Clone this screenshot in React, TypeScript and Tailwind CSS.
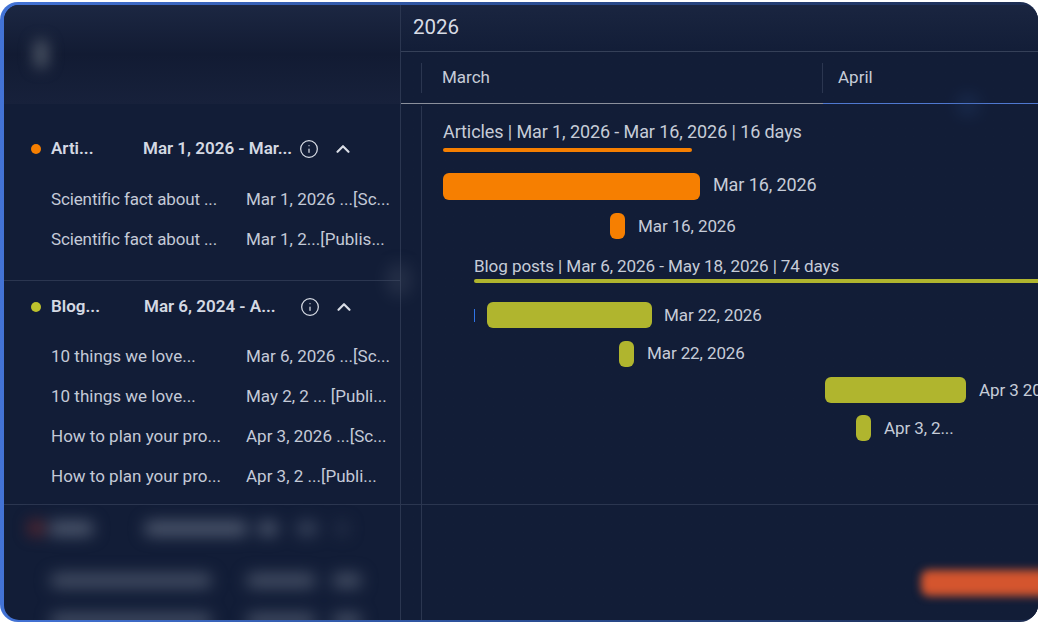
import { ChevronUp, Info } from "lucide-react";

const roboto = "font-['Roboto',sans-serif]";

function GroupHeader({ dot, name, range, nameW, rangeW }: { dot: string; name: string; range: string; nameW: string; rangeW: string }) {
  return (
    <div className="flex h-[40px] items-center pl-[27px]">
      <span className={`h-[10px] w-[10px] shrink-0 rounded-full ${dot}`} />
      <span className={`ml-[10px] whitespace-nowrap text-[17px] font-semibold text-[#d4d9e3] ${nameW}`}>{name}</span>
      <span className={`whitespace-nowrap text-[17px] font-semibold text-[#d4d9e3] ${rangeW}`}>{range}</span>
      <Info size={20} strokeWidth={1.5} className="text-[#d8dce5]" />
      <ChevronUp size={22} strokeWidth={2.4} className="ml-[13px] text-[#d8dce5]" />
    </div>
  );
}

function Item({ a, b, c, tight }: { a: string; b: string; c: string; tight?: boolean }) {
  return (
    <div className="flex h-[40px] items-center pl-[47px] text-[17px] text-[#c4cad7]">
      <span className={tight ? "w-[195px] whitespace-nowrap tracking-[-0.13px]" : "w-[195px] whitespace-nowrap"}>{a}</span>
      <span className="whitespace-nowrap">{b}</span>
      <span className="whitespace-nowrap">{c}</span>
    </div>
  );
}

function BarRow({ left, width, height, color, label, top, text }: { left: string; width: string; height: string; color: string; label: string; top: string; text: string }) {
  return (
    <div className={`flex items-center ${left} ${top}`}>
      <span className={`shrink-0 rounded-[6px] ${width} ${height} ${color}`} />
      <span className={`ml-[13px] whitespace-nowrap leading-[20px] tracking-[-0.1px] text-[#c6ccd8] ${text}`}>{label}</span>
    </div>
  );
}

function BlurRow({ top }: { top: string }) {
  return (
    <div className={`ml-[22px] flex shrink-0 items-center ${top}`}>
      <span className="h-[13px] w-[160px] rounded bg-[#4a5469]" />
      <span className="ml-[36px] h-[13px] w-[68px] rounded bg-[#4a5469]" />
      <span className="ml-[18px] h-[13px] w-[28px] rounded bg-[#4a5469]" />
    </div>
  );
}

export default function App() {
  return (
    <div className={`h-[624px] w-[1038px] overflow-hidden bg-white pt-[2px] ${roboto}`}>
      <div className="h-[620px] w-[1038px] rounded-[18px] bg-gradient-to-r from-[#4373d6] via-[#2b4f96] to-[#1c2c50] pb-[2px] pl-[4px] pt-[3px]">
        <div className="relative flex h-[615px] overflow-hidden rounded-[15px] bg-[#121d37]">
          <div className="flex w-[396px] shrink-0 flex-col">
            <div className="flex h-[99px] shrink-0 items-center bg-gradient-to-b from-[#1c2742] via-[#121b33] to-[#17213b] pl-[27px]">
              <div className="mb-[2px] ml-[2px] h-[30px] w-[16px] rounded-full bg-[#444d5e] blur-[7px]" />
            </div>
            <div className="h-[177px] shrink-0 border-b border-[#2b3650] pt-[25px]">
              <GroupHeader dot="bg-[#f67f01]" name="Arti..." range="Mar 1, 2026 - Mar..." nameW="w-[92px]" rangeW="w-[156px]" />
              <div className="pt-[11px]">
                <Item tight a="Scientific fact about ..." b="Mar 1, 2026 ..." c="[Sc..." />
                <Item tight a="Scientific fact about ..." b="Mar 1, 2..." c="[Publis..." />
              </div>
            </div>
            <div className="h-[224px] shrink-0 border-b border-[#2b3650] pt-[6px]">
              <GroupHeader dot="bg-[#bec22d]" name="Blog..." range="Mar 6, 2024 - A..." nameW="w-[93px]" rangeW="w-[156px]" />
              <div className="pt-[10px]">
                <Item a="10 things we love..." b="Mar 6, 2026 ..." c="[Sc..." />
                <Item a="10 things we love..." b={"May 2, 2 ...\u00a0"} c="[Publi..." />
                <Item a="How to plan your pro..." b="Apr 3, 2026 ..." c="[Sc..." />
                <Item a="How to plan your pro..." b="Apr 3, 2 ..." c="[Publi..." />
              </div>
            </div>
            <div className="flex min-h-0 flex-1 flex-col pl-[25px] pt-[16px] blur-[8px]">
              <div className="flex shrink-0 items-center">
                <span className="h-[14px] w-[14px] rounded-full bg-[#7a2b2a]" />
                <span className="ml-[6px] h-[13px] w-[44px] rounded bg-[#566075]" />
                <span className="ml-[52px] h-[13px] w-[102px] rounded bg-[#566075]" />
                <span className="ml-[12px] h-[13px] w-[18px] rounded bg-[#566075]" />
                <span className="ml-[20px] h-[13px] w-[20px] rounded bg-[#3d4860]" />
                <span className="ml-[20px] h-[13px] w-[10px] rounded bg-[#2d3850]" />
              </div>
              <BlurRow top="mt-[39px]" />
              <BlurRow top="mt-[27px]" />
            </div>
          </div>

          <div className="flex min-w-0 flex-1 flex-col overflow-hidden border-l border-[#2b3650] bg-gradient-to-b from-[#1a2540] to-[#121d37] to-[8%]">
            <div className="flex h-[47px] shrink-0 items-center border-b border-[#354058] pb-[2px] pl-[12px] text-[20.5px] text-[#d8dce5]">2026</div>
            <div className="flex h-[51px] shrink-0 items-center pl-[20px]">
              <div className="flex h-[30px] w-[401px] items-center border-l border-[#2b3650] pl-[20px] text-[17px] text-[#c6ccd8]">March</div>
              <div className="flex h-[30px] items-center border-l border-[#2b3650] pl-[15px] text-[17px] text-[#c6ccd8]">April</div>
            </div>
            <div className="flex h-px shrink-0">
              <div className="w-[422px] bg-[#8b909c]" />
              <div className="flex-1 bg-[#4f78d0]" />
            </div>
            <div className="relative flex min-h-0 flex-1 flex-col">
              <div className="absolute bottom-0 left-[20px] top-[2px] w-px bg-[#2b3650]" />
              <div className="h-[401px] shrink-0 overflow-hidden border-b border-[#2b3650] pl-[42px]">
                <div className="mt-[16px] whitespace-nowrap text-[18px] leading-[24px] tracking-[-0.1px] text-[#c6ccd8]">Articles | Mar 1, 2026 - Mar 16, 2026 | 16 days</div>
                <div className="mt-[4px] h-[4px] w-[249px] rounded-full bg-[#f67f01]" />
                <BarRow top="mt-[21px]" left="" width="w-[257px]" height="h-[27px]" color="bg-[#f67f01]" label="Mar 16, 2026" text="pb-[3px] text-[18px]" />
                <BarRow top="mt-[13px]" left="ml-[167px]" width="w-[15px]" height="h-[26px]" color="bg-[#f67f01]" label="Mar 16, 2026" text="text-[17px]" />
                <div className="ml-[31px] mt-[15px] whitespace-nowrap text-[17.1px] leading-[24px] tracking-[-0.1px] text-[#c6ccd8]">Blog posts | Mar 6, 2026 - May 18, 2026 | 74 days</div>
                <div className="ml-[31px] mt-[1px] h-[4px] rounded-l-full bg-[#b0b52e]" />
                <div className="ml-[31px] mt-[19px] flex items-center">
                  <span className="h-[13px] w-px shrink-0 bg-[#2f74e8]" />
                  <span className="ml-[12px] h-[26px] w-[165px] shrink-0 rounded-[6px] bg-[#b0b52e]" />
                  <span className="ml-[12px] whitespace-nowrap text-[17px] leading-[20px] tracking-[-0.1px] text-[#c6ccd8]">Mar 22, 2026</span>
                </div>
                <BarRow top="mt-[13px]" left="ml-[176px]" width="w-[15px]" height="h-[26px]" color="bg-[#b0b52e]" label="Mar 22, 2026" text="pb-[2px] text-[17px]" />
                <BarRow top="mt-[10px]" left="ml-[382px]" width="w-[141px]" height="h-[26px]" color="bg-[#b0b52e]" label="Apr 3 2026" text="text-[17px]" />
                <BarRow top="mt-[12px]" left="ml-[413px]" width="w-[15px]" height="h-[26px]" color="bg-[#b0b52e]" label="Apr 3, 2..." text="text-[17px]" />
              </div>
              <div className="flex-1 overflow-hidden pl-[520px] pt-[65px]">
                <div className="h-[26px] w-[200px] rounded-[8px] bg-[#d4552e] blur-[4px]" />
              </div>
            </div>
          </div>

          <div className="pointer-events-none absolute left-[952px] top-[88px] h-[24px] w-[24px] rounded-full bg-[#2a4a80] opacity-25 blur-[8px]" />
          <div className="pointer-events-none absolute left-[382px] top-[258px] h-[34px] w-[26px] rounded-full bg-[#4a5468] opacity-30 blur-[8px]" />
        </div>
      </div>
    </div>
  );
}
